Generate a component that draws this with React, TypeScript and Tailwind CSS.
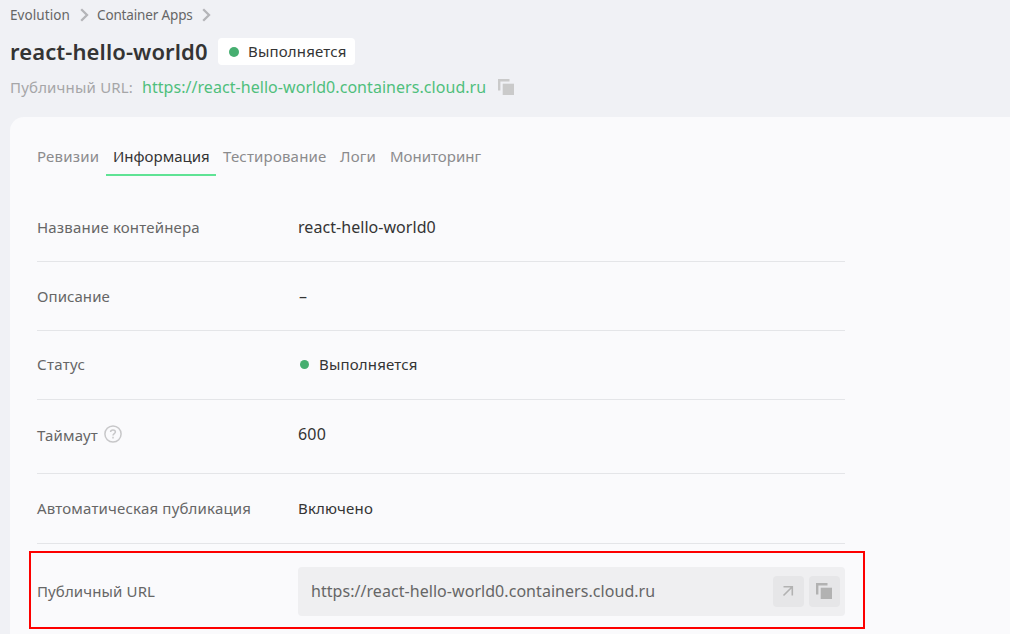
import type { ReactNode } from "react";

function Copy({ className }: { className: string }) {
  return (
    <svg width="16" height="16" viewBox="0 0 16 16" fill="currentColor" className={className}>
      <path d="M0 0H11.5V2.4H2.4V11.5H0Z" />
      <path d="M4.7 4.7H16V16H4.7Z" />
    </svg>
  );
}

function Chevron() {
  return (
    <svg width="9" height="14" viewBox="0 0 9 14" fill="none" stroke="#b4b5b8" strokeWidth="2.3" className="shrink-0">
      <path d="M1.2 1.3L7 7L1.2 12.7" />
    </svg>
  );
}

function Row({ label, children, className }: { label: ReactNode; children: ReactNode; className: string }) {
  return (
    <div className={`flex w-[808px] items-center border-b border-[#e4e5e8] ${className}`}>
      <div className="flex w-[261px] shrink-0 items-center tracking-[0.18px] text-[#666]">{label}</div>
      <div className="flex items-center text-[#343434]">{children}</div>
    </div>
  );
}

export default function App() {
  return (
    <div className="h-[634px] w-[1010px] overflow-hidden bg-[#f0f1f5] font-['Noto_Sans',sans-serif] text-[15px] leading-5 tracking-[0.18px] whitespace-nowrap">
      <header className="h-[117px] pl-[10px]">
        <nav className="flex h-[30px] items-center text-[13.5px] text-[#666]">
          <span className="w-[70px] tracking-[0.08px]">Evolution</span>
          <Chevron />
          <span className="ml-2 w-[105px] tracking-[-0.15px]">Container Apps</span>
          <Chevron />
        </nav>
        <div className="mt-2 flex h-[27px] items-center">
          <h1 className="w-[208px] text-[22px] leading-[27px] font-semibold tracking-[0.1px] text-[#343434]">react-hello-world0</h1>
          <div className="flex h-[27px] w-[137px] items-center rounded bg-white pl-[11px] text-[#343434]">
            <span className="mr-[9px] size-[10px] rounded-full bg-[#46ae70]" />
            <span className="pb-px">Выполняется</span>
          </div>
        </div>
        <div className="mt-3 flex h-5 items-center">
          <span className="w-[132px] text-[#a6a6a8]">Публичный URL:</span>
          <a className="w-[356px] text-[16px] tracking-[0.05px] text-[#4fbf7c]">https://react-hello-world0.containers.cloud.ru</a>
          <Copy className="text-[#cacaca]" />
        </div>
      </header>
      <main className="ml-[10px] h-[517px] rounded-tl-[14px] bg-[#fafafc] pl-[27px]">
        <div className="flex h-[60px] pt-[22px] text-[#8b8b8d]">
          <span className="h-[37px] w-[69px] pt-[7px]">Ревизии</span>
          <span className="h-[37px] w-[110px] border-b-2 border-[#5fe395] pt-[7px] pl-[7px] tracking-normal text-[#343434]">Информация</span>
          <span className="w-[117px] pt-[7px] pl-[7px]">Тестирование</span>
          <span className="w-[50px] pt-[7px] pl-[7px]">Логи</span>
          <span className="pt-[7px] pl-[7px] tracking-normal">Мониторинг</span>
        </div>
        <Row className="mt-4 h-[69px]" label="Название контейнера">
          <span className="text-[16px] tracking-[0.05px]">react-hello-world0</span>
        </Row>
        <Row className="h-[69px]" label={<span className="tracking-[0.06px]">Описание</span>}>
          <span className="pl-px text-[16px]">–</span>
        </Row>
        <Row className="h-[69px] pb-[2px]" label={<span className="tracking-[0.3px]">Статус</span>}>
          <span className="mt-px mr-[10px] ml-[2px] size-[9px] rounded-full bg-[#46ae70]" />
          <span>Выполняется</span>
        </Row>
        <Row
          className="h-[74px] pb-1"
          label={
            <>
              <span className="w-[67px]">Таймаут</span>
              <svg width="18" height="18" viewBox="0 0 18 18" fill="none" stroke="#c7c7c9" strokeWidth="1.5" className="mb-px">
                <circle cx="9" cy="9" r="8.1" />
                <path d="M6.6 7C6.6 4.2 11.4 4.2 11.4 7C11.4 8.6 9 8.5 9 10.4" />
                <path d="M9 11.8V13.4" />
              </svg>
            </>
          }
        >
          <span className="pb-px text-[16px]">600</span>
        </Row>
        <Row className="h-[70px] pb-px" label="Автоматическая публикация">Включено</Row>
        <section className="mt-[7px] -ml-2 flex h-[78px] w-[836px] items-center border-2 border-[#fd0000] pt-[3px] pl-[6px]">
          <span className="w-[261px] pb-px tracking-[0.12px] text-[#666]">Публичный URL</span>
          <div className="flex h-[49px] w-[547px] items-center rounded bg-[#efeff1] pr-[5px] pl-[13px] text-[#666]">
            <span className="flex-1 pb-px text-[16px] tracking-[0.05px]">https://react-hello-world0.containers.cloud.ru</span>
            <button className="flex size-[31px] items-center justify-center rounded bg-[#e6e6e8]">
              <svg width="12" height="12" viewBox="0 0 12 12" fill="none" stroke="#b2b2b2" strokeWidth="1.6" className="mr-px mb-px">
                <path d="M1.5 1.7H10.3V10.5M10.3 1.7L1.5 10.5" />
              </svg>
            </button>
            <button className="ml-[5px] flex size-[31px] items-center justify-center rounded bg-[#e6e6e8]">
              <Copy className="mr-px mb-px text-[#b2b2b2]" />
            </button>
          </div>
        </section>
      </main>
    </div>
  );
}
